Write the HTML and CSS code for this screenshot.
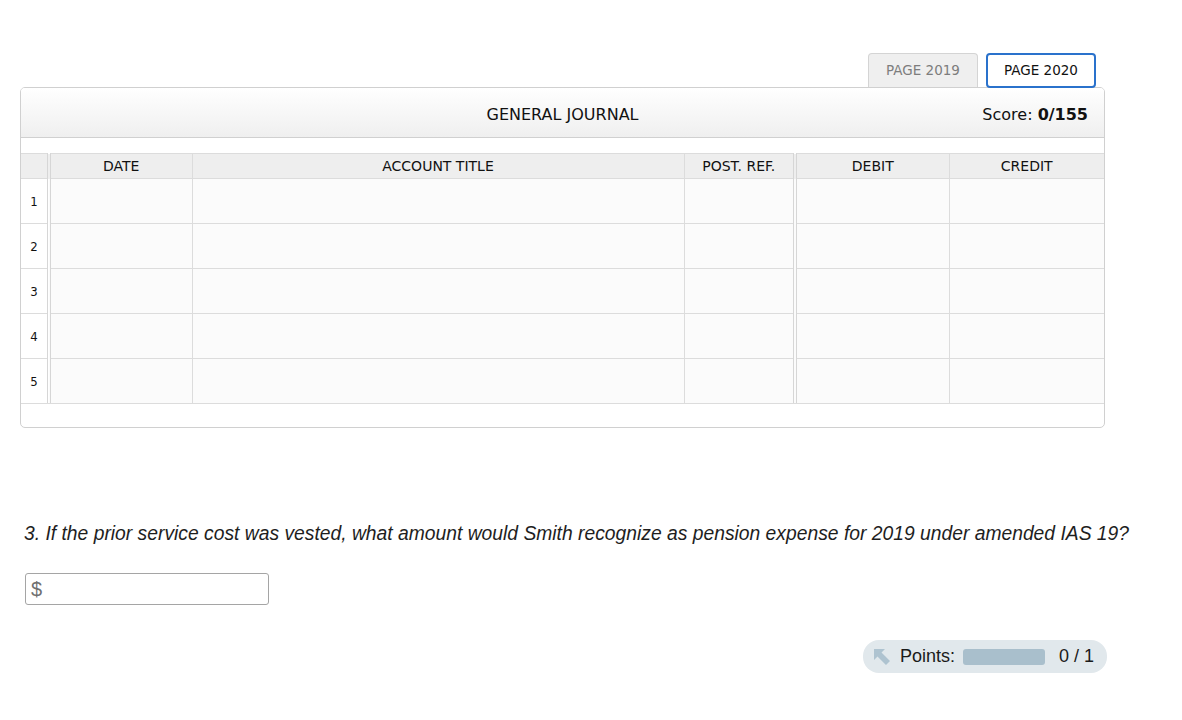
FILE: index.html
```html
<!DOCTYPE html>
<html>
<head>
<meta charset="utf-8">
<link rel="stylesheet" href="styles.css">
</head>
<body>
<div class="page">
  <div class="tabs">
    <div class="tab tab-off">PAGE 2019</div>
    <div class="tab tab-on">PAGE 2020</div>
  </div>
  <div class="journal">
    <div class="jhead">
      <div class="jtitle">GENERAL JOURNAL</div>
      <div class="jscore">Score: <b>0/155</b></div>
    </div>
    <div class="spacer"></div>
    <table class="grid">
      <colgroup>
        <col class="c-num"><col class="c-date"><col class="c-acct"><col class="c-ref"><col class="c-deb"><col class="c-cred">
      </colgroup>
      <thead>
        <tr><th class="num"></th><th class="sep">DATE</th><th>ACCOUNT TITLE</th><th>POST. REF.</th><th class="sep">DEBIT</th><th>CREDIT</th></tr>
      </thead>
      <tbody>
        <tr><td class="num">1</td><td class="sep"></td><td></td><td></td><td class="sep"></td><td></td></tr>
        <tr><td class="num">2</td><td class="sep"></td><td></td><td></td><td class="sep"></td><td></td></tr>
        <tr><td class="num">3</td><td class="sep"></td><td></td><td></td><td class="sep"></td><td></td></tr>
        <tr><td class="num">4</td><td class="sep"></td><td></td><td></td><td class="sep"></td><td></td></tr>
        <tr><td class="num">5</td><td class="sep"></td><td></td><td></td><td class="sep"></td><td></td></tr>
      </tbody>
    </table>
    <div class="jfoot"></div>
  </div>

  <p class="question">3. If the prior service cost was vested, what amount would Smith recognize as pension expense for 2019 under amended IAS 19?</p>

  <div class="answer"><span class="dollar">$</span></div>

  <div class="points-row">
    <div class="points">
      <svg class="picon" width="18" height="18" viewBox="0 0 18 18"><path d="M1 1 H12 L8.5 4.5 L17 13 L13 17 L4.5 8.5 L1 12 Z" fill="#aec3d0"/></svg>
      <span class="plabel">Points:</span>
      <span class="pbar"></span>
      <span class="pval">0 / 1</span>
    </div>
  </div>
</div>
</body>
</html>
```
FILE: styles.css
```css
html, body { margin: 0; padding: 0; background: #fff; }
.page { padding: 53px 0 0 20px; width: 1085px; }
.tabs { display: flex; justify-content: flex-end; gap: 8px; padding-right: 9px; height: 34px; position: relative; z-index: 2; }
.tab {
  font-family: "DejaVu Sans", sans-serif;
  font-size: 13.5px; width: 110px; box-sizing: border-box; text-align: center;
  line-height: 32px;
}
.tab-off { background: #efefef; border: 1px solid #d4d4d4; border-bottom: none; border-radius: 4px 4px 0 0; color: #7d7d7d; height: 34px; }
.tab-on { background: #fff; border: 2px solid #2a72cc; border-radius: 4px; color: #111; height: 35px; line-height: 30px; }
.journal { border: 1px solid #d0d0d0; border-radius: 5px; overflow: hidden; }
.jhead {
  height: 49px; border-bottom: 1px solid #d0d0d0;
  background: linear-gradient(#ffffff, #efefef);
  display: flex; align-items: center; position: relative;
  font-family: "DejaVu Sans", sans-serif; color: #111;
}
.jtitle { flex: 1; text-align: center; font-size: 16px; padding-top: 4px; }
.jscore { position: absolute; right: 16px; top: 17px; font-size: 16px; }
.jscore b { font-weight: bold; }
.spacer { height: 15px; }
.grid { width: 100%; border-collapse: collapse; table-layout: fixed;
  font-family: "DejaVu Sans", sans-serif; font-size: 14px; color: #111; }
.c-num { width: 28px; }
.c-date { width: 143px; }
.c-acct { width: 492px; }
.c-ref { width: 111px; }
.c-deb { width: 154px; }
.c-cred { width: auto; }
.grid th { height: 24px; padding: 0; background: #eeeeee; border: 1px solid #dcdcdc; font-weight: normal; text-align: center; }
.grid td { height: 44px; padding: 0; background: #fbfbfb; border: 1px solid #dcdcdc; }
.grid tr > :first-child { border-left: none; }
.grid tr > :last-child { border-right: none; }
.grid td.num { background: #fff; text-align: center; font-size: 13px; font-stretch: condensed; }
.grid th.num { background: #eeeeee; }
.grid .sep { border-left: 4px double #d6d6d6; }
.jfoot { height: 23px; border-top: 1px solid #dcdcdc; margin-top: -1px; }
.question {
  font-family: "Liberation Sans", Arial, sans-serif; font-style: italic; font-size: 19.3px; color: #1e1e1e;
  margin: 95px 0 0 4px; white-space: nowrap; line-height: 22px;
}
.answer {
  margin: 28px 0 0 5px; width: 244px; height: 32px; box-sizing: border-box;
  border: 1px solid #a5a5a5; border-radius: 3px; display: flex; align-items: center;
}
.dollar { font-family: "Liberation Sans", Arial, sans-serif; font-size: 20px; color: #707070; margin-left: 5px; }
.points-row { display: flex; justify-content: flex-end; margin-top: 35px; margin-right: -2px; }
.points {
  width: 244px; height: 33px; box-sizing: border-box; border-radius: 16px; background: #e1e8ec;
  display: flex; align-items: center; padding-left: 10px;
  font-family: "Liberation Sans", Arial, sans-serif; font-size: 18px; color: #1a1a1a;
}
.picon { margin-right: 9px; }
.plabel { margin-right: 8px; }
.pbar { width: 82px; height: 16px; border-radius: 3px; background: #a9bfcc; margin-right: 14px; }
```
